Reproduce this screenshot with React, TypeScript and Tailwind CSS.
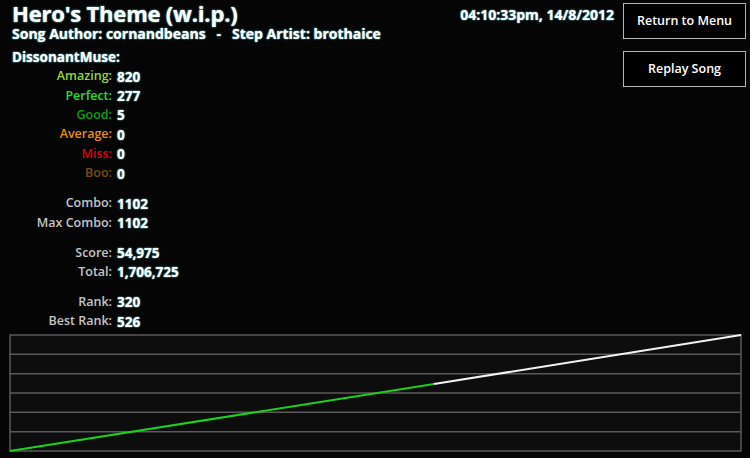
import React from "react";

const glow = "[text-shadow:0_0_2px_rgba(110,200,200,0.9),0_0_1px_rgba(110,200,200,0.9)]";

type Row = { label: string; value: string; color: string };

const judgements: Row[] = [
  { label: "Amazing:", value: "820", color: "text-[#8fd63c]" },
  { label: "Perfect:", value: "277", color: "text-[#22e022]" },
  { label: "Good:", value: "5", color: "text-[#0c9e0c]" },
  { label: "Average:", value: "0", color: "text-[#e58f00]" },
  { label: "Miss:", value: "0", color: "text-[#e00000]" },
  { label: "Boo:", value: "0", color: "text-[#7b4a12]" },
];

const groups: Row[][] = [
  judgements,
  [
    { label: "Combo:", value: "1102", color: "text-[#c4c4c4]" },
    { label: "Max Combo:", value: "1102", color: "text-[#c4c4c4]" },
  ],
  [
    { label: "Score:", value: "54,975", color: "text-[#c4c4c4]" },
    { label: "Total:", value: "1,706,725", color: "text-[#c4c4c4]" },
  ],
  [
    { label: "Rank:", value: "320", color: "text-[#c4c4c4]" },
    { label: "Best Rank:", value: "526", color: "text-[#c4c4c4]" },
  ],
];

function StatGroup({ rows }: { rows: Row[] }) {
  return (
    <div className="flex flex-col">
      {rows.map((r) => (
        <div key={r.label} className="flex h-[19.4px] items-center">
          <span className={`w-[100px] text-right text-[12.5px] font-semibold ${r.color}`}>{r.label}</span>
          <span className={`ml-[5px] text-[13.5px] font-bold text-white ${glow}`}>{r.value}</span>
        </div>
      ))}
    </div>
  );
}

// score progress over the song: green = played so far, white = the rest
function ScoreChart() {
  const w = 731;
  const h = 116;
  const rows = 6;
  const splitX = 425;
  const splitY = 67;
  return (
    <svg width={w + 2} height={h + 2} className="block">
      <rect x={1} y={1} width={w} height={h} fill="#0d0d0d" stroke="#5a5a5a" strokeWidth={1.5} />
      {Array.from({ length: rows - 1 }, (_, i) => {
        const y = 1 + ((i + 1) * h) / rows;
        return <line key={i} x1={1} x2={w + 1} y1={y} y2={y} stroke="#5a5a5a" strokeWidth={1.5} />;
      })}
      <line x1={1} y1={h + 1} x2={splitX} y2={h + 1 - splitY} stroke="#1ecf1e" strokeWidth={2} />
      <line x1={splitX} y1={h + 1 - splitY} x2={w + 1} y2={1} stroke="#f2f2f2" strokeWidth={2} />
    </svg>
  );
}

export default function App() {
  return (
    <div
      className="relative h-[458px] w-[750px] overflow-hidden bg-[#050505] text-white"
      style={{ fontFamily: '"Open Sans", "Noto Sans", sans-serif' }}
    >
      <div className="flex justify-between">
        {/* song header + player stats */}
        <div className="flex flex-col pl-[12px] pt-[1px]">
          <h1 className={`text-[22px] font-bold leading-[25px] tracking-[-0.2px] ${glow}`}>Hero's Theme (w.i.p.)</h1>
          <p className={`whitespace-pre text-[14px] font-bold leading-[16px] ${glow}`}>
            Song Author: cornandbeans   -   Step Artist: brothaice
          </p>
          <p className={`mt-[7px] text-[13.5px] font-bold leading-[16px] ${glow}`}>DissonantMuse:</p>
          <div className="mt-[2px] flex flex-col gap-[10.6px]">
            {groups.map((g, i) => (
              <StatGroup key={i} rows={g} />
            ))}
          </div>
        </div>

        {/* timestamp + nav buttons */}
        <div className="flex items-start gap-[9px] pr-[4px] pt-[3px]">
          <span className={`mt-[1px] text-[14px] font-bold ${glow}`}>04:10:33pm, 14/8/2012</span>
          <div className="flex flex-col gap-[12px]">
            <button className="h-[36px] w-[123px] border-[1.5px] border-[#b4b4b4] bg-black text-[12.5px] font-semibold text-white">
              Return to Menu
            </button>
            <button className="h-[36px] w-[123px] border-[1.5px] border-[#b4b4b4] bg-black text-[12.5px] font-semibold text-white">
              Replay Song
            </button>
          </div>
        </div>
      </div>

      <div className="absolute bottom-[6px] left-[9px]">
        <ScoreChart />
      </div>
    </div>
  );
}
